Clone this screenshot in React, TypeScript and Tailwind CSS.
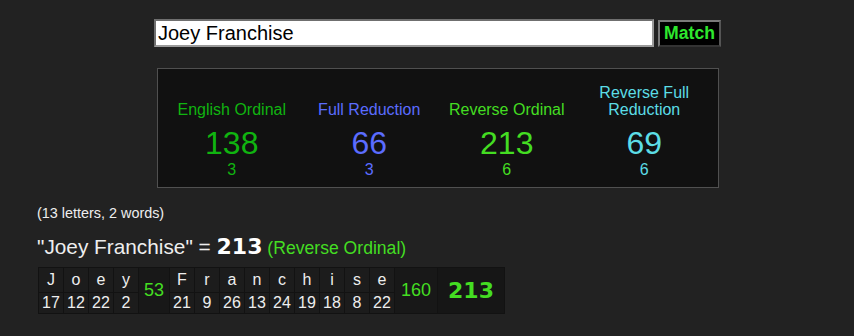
import { useState } from 'react'

const ciphers = [
  { name: 'English Ordinal', value: 138, words: 3, color: 'text-[#10b410]' },
  { name: 'Full Reduction', value: 66, words: 3, color: 'text-[#5b6cff]' },
  { name: 'Reverse Ordinal', value: 213, words: 6, color: 'text-[#44dd22]' },
  { name: 'Reverse Full Reduction', value: 69, words: 6, color: 'text-[#5cdde6]' },
]

const words = [
  { letters: [['J', 17], ['o', 12], ['e', 22], ['y', 2]], sum: 53 },
  {
    letters: [['F', 21], ['r', 9], ['a', 26], ['n', 13], ['c', 24], ['h', 19], ['i', 18], ['s', 8], ['e', 22]],
    sum: 160,
  },
]

export default function App() {
  const [phrase, setPhrase] = useState('Joey Franchise')

  return (
    <div className="min-h-[336px] bg-[#222222] font-['Liberation_Sans',Arial,sans-serif] text-[#eeeeee]">
      {/* Search */}
      <div className="flex items-start gap-[4px] pl-[154px] pt-[19px]">
        <input
          value={phrase}
          onChange={(e) => setPhrase(e.target.value)}
          className="w-[500px] h-[28px] bg-white border-2 border-t-[#6f6f6f] border-l-[#6f6f6f] border-r-[#9a9a9a] border-b-[#9a9a9a] px-[2px] text-[20px] text-black outline-none"
        />
        <button className="mt-[1px] w-[63px] h-[27px] bg-black border-2 border-t-[#7a7a7a] border-l-[#7a7a7a] border-r-[#555555] border-b-[#333333] text-[17.6px] font-bold text-[#2ee82e] leading-none">
          Match
        </button>
      </div>

      {/* Cipher panel */}
      <div className="ml-[157px] mt-[21px] w-[562px] h-[120px] bg-[#111111] border border-[#505050] grid grid-cols-4 items-end px-[5px] pb-[8px]">
        {ciphers.map((c) => (
          <div key={c.name} className={`flex flex-col items-center text-center ${c.color}`}>
            <div className="text-[16px] leading-[17px] max-w-[120px]">{c.name}</div>
            <div className="mt-[7px] text-[32px] leading-[36px]">{c.value}</div>
            <div className="text-[16px] leading-[18px]">{c.words}</div>
          </div>
        ))}
      </div>

      <div className="ml-[37px] mt-[17px] text-[14.4px] leading-[17px]">(13 letters, 2 words)</div>

      <div className="ml-[37px] mt-[13px] flex items-baseline whitespace-pre leading-[24px]">
        <span className="text-[20.8px]">"{phrase}" = </span>
        <span className="font-['DejaVu_Sans',sans-serif] font-bold text-[22px] text-white">213</span>
        <span className="text-[17.6px] text-[#44dd22]"> (Reverse Ordinal)</span>
      </div>

      {/* Breakdown table */}
      <table className="ml-[38px] mt-[7px] border-separate border-spacing-[1px] bg-[#121212] text-[16px]">
        <tbody>
          <tr className="h-[22px]">
            {words.map((w, wi) => [
              ...w.letters.map(([l], i) => (
                <td key={`l${wi}-${i}`} className="w-[24px] p-0 bg-[#1c1c1c] text-center align-middle">
                  {l}
                </td>
              )),
              <td
                key={`s${wi}`}
                rowSpan={2}
                className={`${wi === 0 ? 'w-[30px]' : 'w-[42px]'} p-0 bg-[#181818] text-center align-middle text-[18px] text-[#44dd22]`}
              >
                {w.sum}
              </td>,
            ])}
            <td
              rowSpan={2}
              className="w-[66px] p-0 bg-[#161616] text-center align-middle font-['DejaVu_Sans',sans-serif] font-bold text-[22px] text-[#44dd22]"
            >
              213
            </td>
          </tr>
          <tr className="h-[20px]">
            {words.map((w, wi) =>
              w.letters.map(([, n], i) => (
                <td key={`n${wi}-${i}`} className="w-[24px] p-0 bg-[#1c1c1c] text-center align-middle leading-[20px]">
                  {n}
                </td>
              ))
            )}
          </tr>
        </tbody>
      </table>
    </div>
  )
}
